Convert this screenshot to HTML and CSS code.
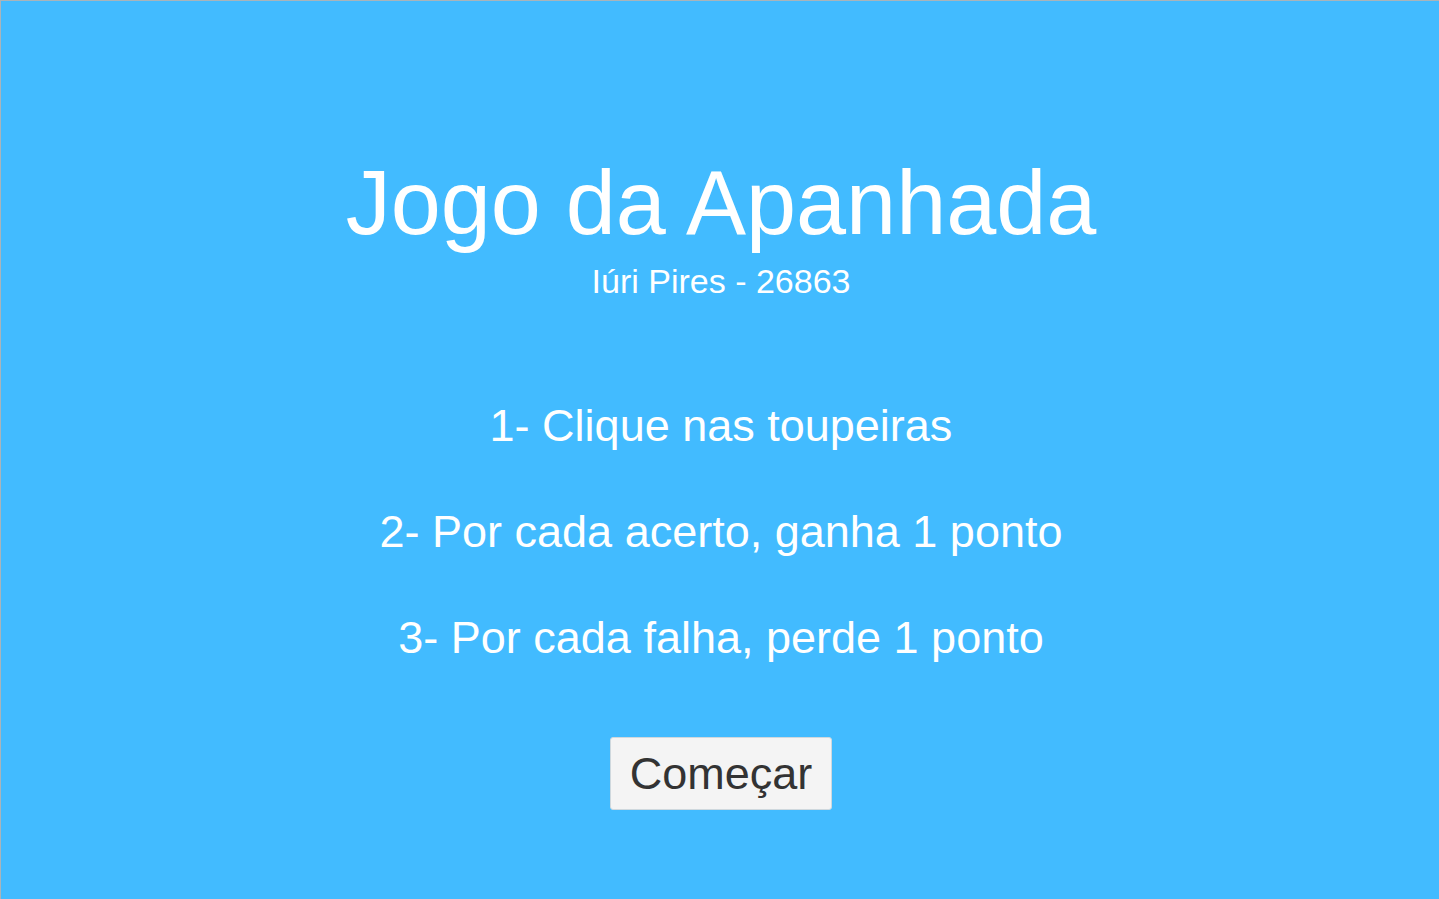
FILE: index.html
```html
<!DOCTYPE html>
<html lang="pt">
<head>
<meta charset="utf-8">
<title>Jogo da Apanhada</title>
<link rel="stylesheet" href="styles.css">
</head>
<body>
<main class="screen">
  <h1 class="title">Jogo da Apanhada</h1>
  <p class="author">Iúri Pires - 26863</p>
  <ol class="rules">
    <li>1- Clique nas toupeiras</li>
    <li>2- Por cada acerto, ganha 1 ponto</li>
    <li>3- Por cada falha, perde 1 ponto</li>
  </ol>
  <button class="start" type="button">Começar</button>
</main>
</body>
</html>
```

FILE: styles.css
```css
html, body {
  margin: 0;
  padding: 0;
  height: 100%;
}
body {
  background: #42bbff;
  font-family: "Liberation Sans", Arial, sans-serif;
  color: #ffffff;
}
.screen {
  box-sizing: border-box;
  height: 100%;
  border-top: 1px solid #a9b4ba;
  border-left: 1px solid #a9b4ba;
  display: flex;
  flex-direction: column;
  align-items: center;
  padding-top: 152px;
  padding-left: 2px;
}
.title {
  margin: 0;
  font-size: 90px;
  font-weight: normal;
  line-height: 100px;
}
.author {
  margin: 8px 0 0;
  font-size: 34px;
  line-height: 40px;
}
.rules {
  list-style: none;
  margin: 72px 0 0;
  padding: 0;
  text-align: center;
}
.rules li {
  font-size: 45px;
  line-height: 106px;
}
.start {
  margin-top: 46px;
  font-family: "Liberation Sans", Arial, sans-serif;
  font-size: 45px;
  line-height: 71px;
  padding: 0 19px;
  color: #333333;
  background: #f4f4f4;
  border: 1px solid #cfd8dd;
  border-radius: 3px;
}
```
